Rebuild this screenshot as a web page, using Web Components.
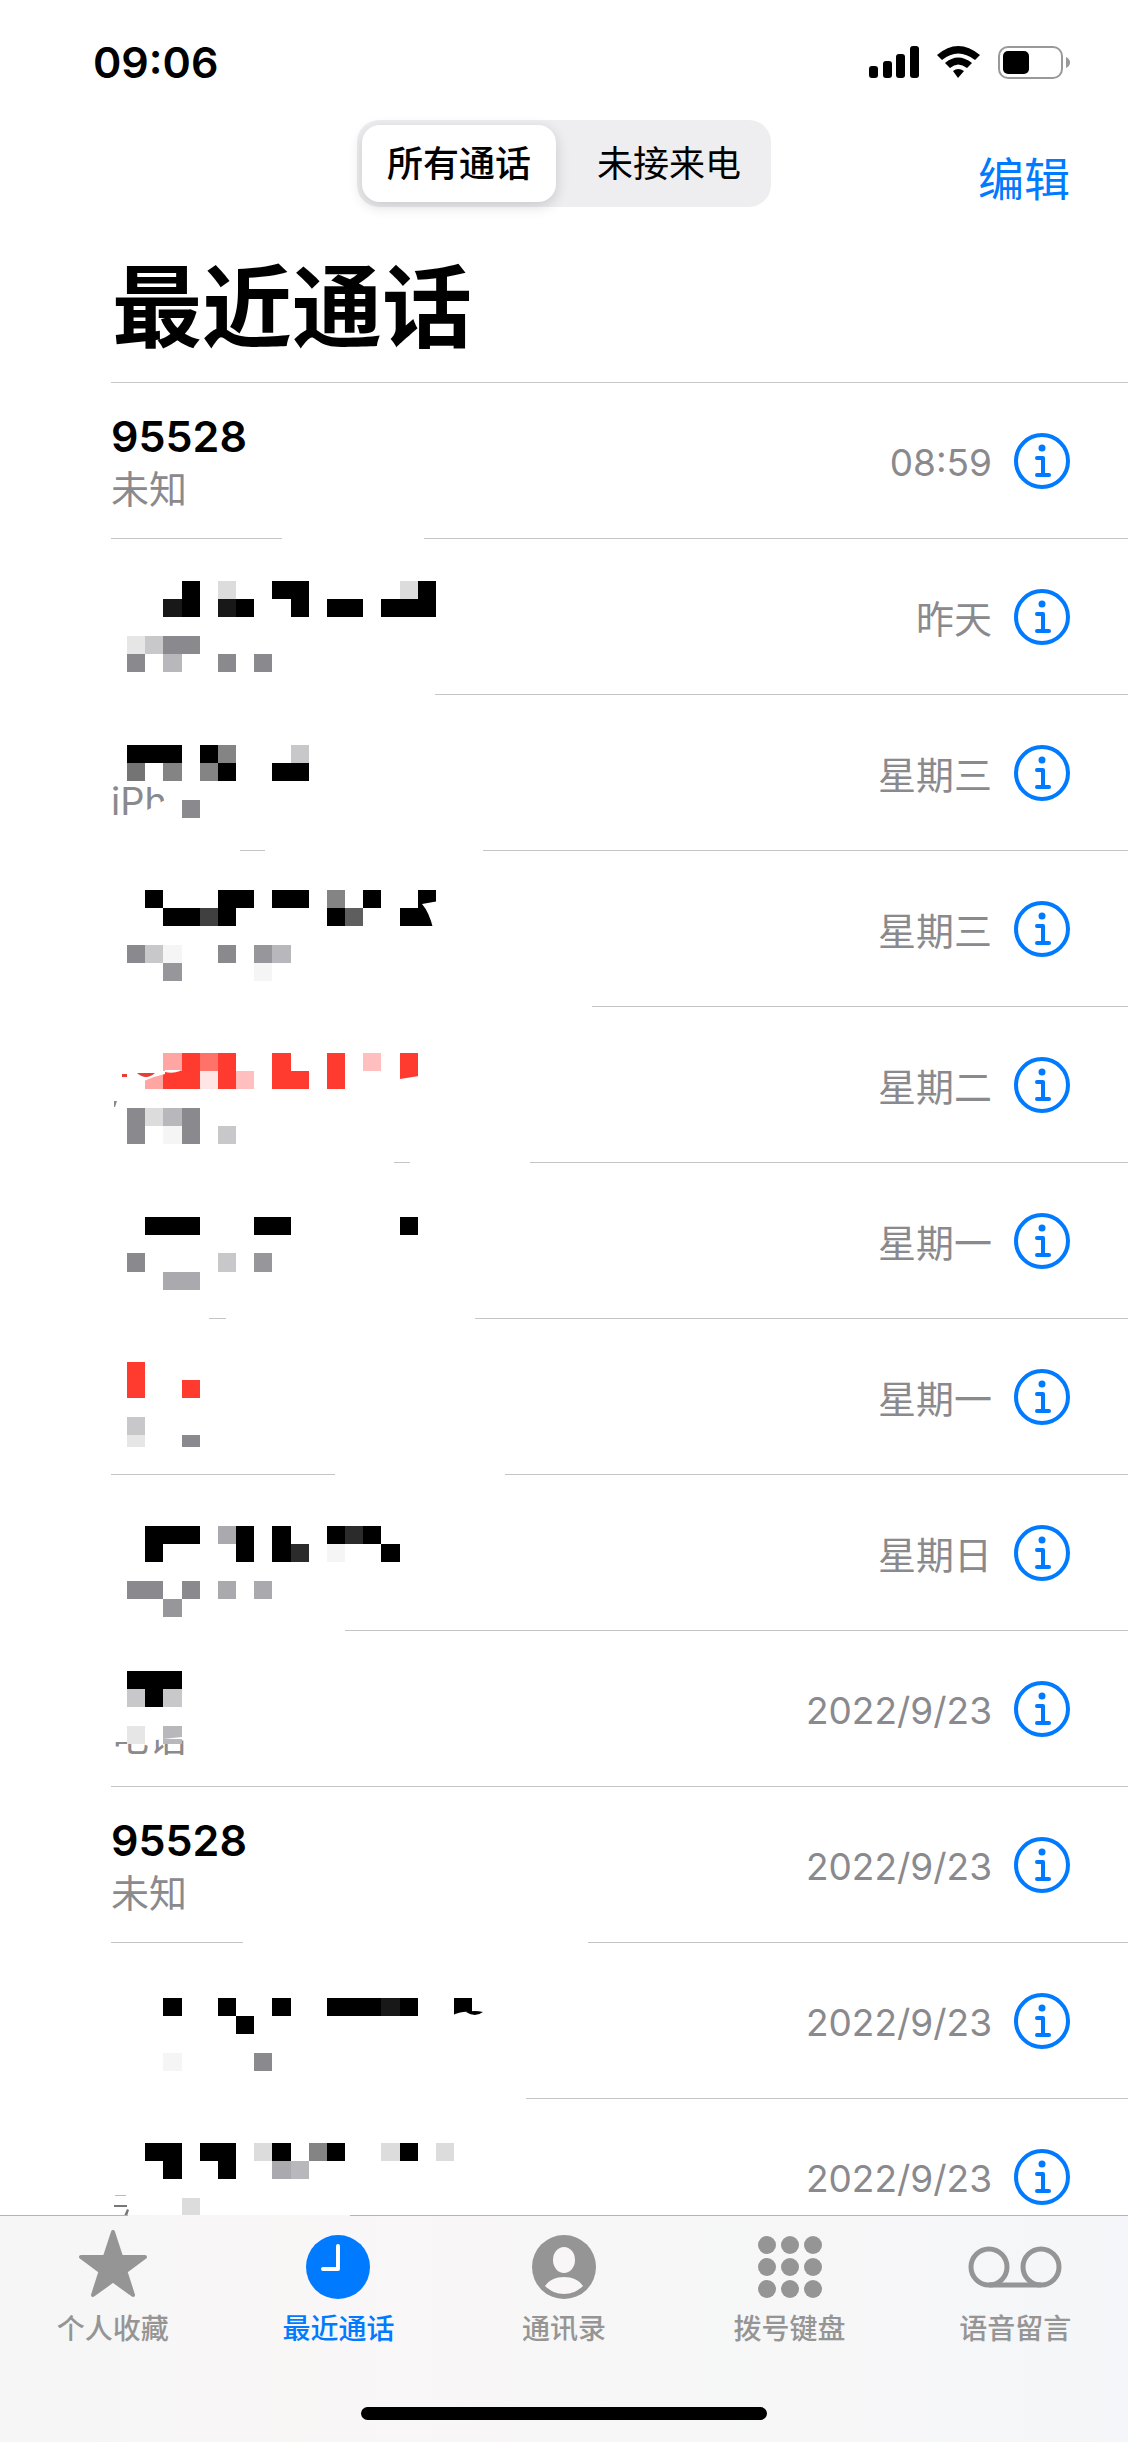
<!DOCTYPE html>
<html lang="zh-CN">
<head>
<meta charset="utf-8">
<meta name="viewport" content="width=device-width, initial-scale=1">
<title>最近通话</title>
<style>
  body {
    margin: 0;
    background: #fff;
    color: #000;
    font-family: Inter, "Noto Sans CJK SC", sans-serif;
  }
</style>
</head>
<body>
<phone-app></phone-app>

<script>
'use strict';

function attach(element, html) {
  const template = document.createElement('template');
  template.innerHTML = html;
  element.attachShadow({ mode: 'open' });
  element.shadowRoot.appendChild(template.content.cloneNode(true));
}

// One character per mosaic cell, a space is an empty cell
const PALETTE = {
  0: '#000', 1: '#181818', 2: '#2b2b2b', 4: '#404040', 5: '#5e5e5e', 7: '#747474', 8: '#848484',
  g: '#8a8a8e', h: '#96969b', a: '#aaaaae', b: '#b8b8bc', c: '#c8c8ca', d: '#dcdcdd', e: '#e6e6e7', f: '#f5f5f6',
  R: '#ff3b30', r: '#ff726a', s: '#ffa5a2', t: '#ffbfbe', u: '#ffe5e4'
};
const CELL = 18.17;

// rule: visible parts of the line under the row, measured from the text edge
const CALLS = [
  { name: '95528', label: '未知', time: '08:59', rule: [[0, 171], [313]] },
  {
    time: '昨天', rule: [[324]], top: 42,
    mosaic: ['   0 d  00     d0', '  10 10  0 00 000', '', 'ecgg', 'g b  g g']
  },
  {
    label: 'iPh', time: '星期三', rule: [[129, 154], [372]], top: 50,
    mosaic: ['000 08   c', '7 8 80  00', '', '   g'],
    under: '<path fill="#fff" d="M33 117l7-4 12-7 10-2v22H33z"/>'
  },
  {
    time: '星期三', rule: [[481]], top: 39,
    mosaic: [' 0   00 00 8 0  0', '  0040     05  00', '', 'gcf  g hb', '  h    f'],
    over: '<path fill="#fff" d="M328 50l-17 3q7 8 11 24h6z"/>'
  },
  {
    time: '星期二', rule: [[283, 299], [419]], top: 46,
    mosaic: ['  sRrR  R  R t R', ' sRRuRt RR R   R', '', 'gdbg', 'g fg c'],
    over: `<path fill="#fff" d="M33 64v10q11-5 21-7v-3zM54 65q8 2 15-1v-1H54zM289 72l19-3v15h-19z"/>
      <path fill="#e93c33" d="M11 67h5v3h-5zM26 66h18q-9 8-18 0"/>
      <path fill="#8a8a8e" d="M3 94h3l-2 6H3z"/>`
  },
  {
    time: '星期一', rule: [[98, 115], [364]], top: 54,
    mosaic: [' 000   00      0', '', 'g    c h', '  aa']
  },
  {
    time: '星期一', rule: [[0, 224], [394]], top: 43,
    mosaic: ['R', 'R  R', '', 'c', 'e  g'],
    over: '<path fill="#fff" d="M14 128h80v14H14z"/>'
  },
  {
    time: '星期日', rule: [[234]], top: 51,
    mosaic: [' 000 a0 0  020', ' 0    0 02 f  0', '', 'gg g a a', '  h']
  },
  {
    label: '电话', time: '2022/9/23', rule: [[0]], top: 40,
    mosaic: ['000', 'c0c', '', 'e b'],
    under: '<path fill="#fff" d="M0 78h80v26l-28 4-20 3H0z"/>',
    over: '<path fill="#fff" d="M52 108l19-2v2z"/>'
  },
  { name: '95528', label: '未知', time: '2022/9/23', rule: [[0, 132], [477]] },
  {
    time: '2022/9/23', rule: [[415]], top: 55,
    mosaic: ['  0  0  0  00010  0', '      0', '', '  f    g'],
    over: `<path fill="#fff" d="M342 72q10-4 15-3l5 3v4h-20z"/>
      <path d="M355 69q9-2 17 0-8 6-17 0"/>`
  },
  {
    time: '2022/9/23', rule: [], top: 44,
    mosaic: [' 00 00 d0 80  d0 d', '  0  0  ab', '', '   d'],
    over: `<path fill="#bbb" d="M4 96h11v1H4z"/>
      <path fill="#77777b" d="M3 106h13v2H3zM16 110l2 1-2 6h-3z"/>`
  }
];

const ICONS = {
  star: '<path d="M35 2 43.200 27H67L47.500 41.500 55 65 35 50.500 15 65 22.500 41.500 3 27H26.800z" stroke="currentColor" stroke-width="4" stroke-linejoin="round"/>',
  clock: '<circle cx="35" cy="37" r="32"/><path d="M35 16v23H20" fill="none" stroke="#fff" stroke-width="4" stroke-linecap="round" stroke-linejoin="round"/>',
  person: '<circle cx="35" cy="37" r="32"/><ellipse cx="35" cy="30" rx="11" ry="13" fill="#f8f6f6"/><path d="M16 56C20 50 27 47 35 47s15 3 19 9c-5 5-12 8-19 8s-14-3-19-8z" fill="#f8f6f6"/>',
  keypad: [14, 36, 58].map(y => [12, 35, 58].map(x => `<circle cx="${x}" cy="${y + 1}" r="9"/>`).join('')).join(''),
  voicemail: '<g fill="none" stroke="currentColor" stroke-width="5"><circle cx="9" cy="37" r="18"/><circle cx="61" cy="37" r="18"/><path d="M9 55h52"/></g>'
};

customElements.define('status-bar', class StatusBar extends HTMLElement {
  constructor() {
    super();
    attach(this, `
    <style>
      :host {
        display: flex;
        align-items: center;
        justify-content: space-between;
        padding: 34px 58px 30px 93px;
        font-size: 43px;
        line-height: 56px;
        font-weight: 600;
      }
      svg { display: block; }
    </style>
    <span>09:06</span>
    <svg width="202" height="36" viewBox="0 0 202 36" aria-hidden="true">
      <rect x="1" y="22" width="9" height="12" rx="3"/>
      <rect x="15" y="17" width="9" height="17" rx="3"/>
      <rect x="28" y="10" width="9" height="24" rx="3"/>
      <rect x="42" y="2" width="9" height="32" rx="3"/>
      <path d="M69 11Q90-7 112 11l-5 5Q90 3 74 16zM77 19q13-11 27 0l-5 5q-9-7-17 0zM85 27q5-4 11 0l-6 7z"/>
      <rect x="131" y="3" width="63" height="31" rx="9" fill="none" stroke="#999" stroke-width="2"/>
      <rect x="135" y="7" width="26" height="23" rx="5"/>
      <path d="M198 13q4 2 4 5.500t-4 5.500z" fill="#999"/>
    </svg>`);
  }
});

customElements.define('segmented-control', class SegmentedControl extends HTMLElement {
  constructor() {
    super();
    attach(this, `
    <style>
      :host {
        display: grid;
        grid-template-columns: 1fr 1fr;
        gap: 16px;
        padding: 5px;
        border-radius: 22px;
        background: #eeeef0;
      }
      button {
        padding: 13px 25px 12px;
        border: 0;
        border-radius: 18px;
        background: none;
        color: inherit;
        font: 400 36px/52px Inter, "Noto Sans CJK SC", sans-serif;
        white-space: nowrap;
      }
      button[aria-pressed="true"] {
        background: #fff;
        box-shadow: 0 4px 14px rgba(0, 0, 0, .16);
        font-weight: 500;
      }
    </style>
    <button type="button" aria-pressed="true">所有通话</button>
    <button type="button" aria-pressed="false">未接来电</button>`);
    this.buttons = [...this.shadowRoot.querySelectorAll('button')];
    this.buttons.forEach(button => button.addEventListener('click', () => {
      this.buttons.forEach(b => b.setAttribute('aria-pressed', b === button));
    }));
  }
});

customElements.define('page-header', class PageHeader extends HTMLElement {
  constructor() {
    super();
    attach(this, `
    <style>
      :host { display: block; }
      .bar {
        display: grid;
        grid-template-columns: 1fr auto 1fr;
        padding: 0 58px;
      }
      .edit {
        justify-self: end;
        align-self: end;
        padding: 0;
        border: 0;
        background: none;
        color: #007aff;
        font: 400 46px/56px Inter, "Noto Sans CJK SC", sans-serif;
      }
      h1 {
        margin: 0;
        padding: 50px 58px 23px 112px;
        font-size: 90px;
        line-height: 102px;
        font-weight: 700;
      }
      hr {
        height: 1px;
        margin: 0 0 0 111px;
        border: 0;
        background: #c8c8ca;
      }
    </style>
    <div class="bar">
      <span></span>
      <segmented-control></segmented-control>
      <button class="edit" type="button">编辑</button>
    </div>
    <h1><slot></slot></h1>
    <hr>`);
  }
});

customElements.define('call-row', class CallRow extends HTMLElement {
  set call(call) {
    const cells = (call.mosaic || []).map((line, row) => [...line].map((key, col) => key === ' ' ? '' :
      `<rect x="${16 + Math.round(col * CELL)}" y="${call.top + Math.round(row * CELL)}"
        width="${Math.round((col + 1) * CELL) - Math.round(col * CELL)}"
        height="${Math.round((row + 1) * CELL) - Math.round(row * CELL)}" fill="${PALETTE[key]}"/>`
    ).join('')).join('');
    const rules = call.rule.map(([from, to]) =>
      `<i style="left: ${from}px; ${to ? `width: ${to - from}px` : 'right: 0'}"></i>`).join('');

    attach(this, `
    <style>
      :host {
        position: relative;
        display: flex;
        align-items: center;
        box-sizing: border-box;
        min-height: 156px;
        margin-left: 111px;
        padding-right: 58px;
      }
      .who {
        flex: 1;
        align-self: flex-start;
        padding: 26px 0 24px;
      }
      .name {
        min-height: 54px;
        font-size: 43px;
        line-height: 54px;
        font-weight: 600;
      }
      .label, time {
        color: #8a8a8e;
        font-size: 38px;
        line-height: 52px;
      }
      time { margin: 4px 22px 0 0; }
      time.digits { font-size: 37px; }
      button {
        padding: 0;
        border: 0;
        background: none;
        color: #007aff;
      }
      svg { display: block; }
      .cover {
        position: absolute;
        left: 0;
        top: 0;
      }
      i {
        position: absolute;
        bottom: 0;
        height: 1px;
        background: #c4c4c6;
      }
    </style>
    <div class="who">
      <div class="name">${call.name || ''}</div>
      <div class="label">${call.label || ''}</div>
    </div>
    <time class="${/\d/.test(call.time) ? 'digits' : ''}">${call.time}</time>
    <button type="button" aria-label="详情">
      <svg width="56" height="56" viewBox="0 0 56 56" fill="none" stroke="currentColor" stroke-width="4">
        <circle cx="28" cy="28" r="26"/>
        <circle cx="28" cy="15" r="3.500" fill="currentColor" stroke="none"/>
        <path d="M23 25h6v17M23 42h12" stroke-width="4" stroke-linecap="round" stroke-linejoin="round"/>
      </svg>
    </button>
    ${cells ? `<svg class="cover" width="400" height="156" viewBox="0 0 400 156" aria-hidden="true">
      ${call.under || ''}<g shape-rendering="crispEdges">${cells}</g>${call.over || ''}
    </svg>` : ''}
    ${rules}`);
  }
});

customElements.define('call-list', class CallList extends HTMLElement {
  constructor() {
    super();
    attach(this, `
    <style>
      :host {
        display: block;
        overflow: hidden;
      }
    </style>`);
    CALLS.forEach(call => {
      const row = document.createElement('call-row');
      row.call = call;
      this.shadowRoot.appendChild(row);
    });
  }
});

customElements.define('tab-item', class TabItem extends HTMLElement {
  constructor() {
    super();
    attach(this, `
    <style>
      :host {
        display: block;
        color: #969595;
      }
      :host([selected]) { color: #007aff; }
      a {
        display: flex;
        flex-direction: column;
        align-items: center;
        gap: 8px;
        color: inherit;
        font-size: 28px;
        line-height: 38px;
        font-weight: 500;
        text-decoration: none;
        white-space: nowrap;
      }
      svg {
        display: block;
        overflow: visible;
      }
    </style>
    <a href="#"><svg width="70" height="72" viewBox="0 0 70 72" fill="currentColor" aria-hidden="true">${ICONS[this.getAttribute('icon')]}</svg><slot></slot></a>`);
  }
});

customElements.define('tab-bar', class TabBar extends HTMLElement {
  constructor() {
    super();
    attach(this, `
    <style>
      :host {
        display: block;
        background: linear-gradient(90deg, #f6f6f6, #f9f6f6 25%, #f7f7f7 60%, #f5f6f9);
      }
      .line {
        height: 1px;
        background: linear-gradient(#b4b4b4, #b4b4b4) no-repeat 350px 0, linear-gradient(#b4b4b4, #b4b4b4) no-repeat 0 0 / 128px 1px;
      }
      nav {
        display: grid;
        grid-template-columns: repeat(5, 1fr);
        padding: 14px 0 59px;
      }
      .home {
        width: 36%;
        height: 13px;
        margin: 0 auto;
        border-radius: 7px;
        background: #000;
      }
      footer { padding-bottom: 22px; }
    </style>
    <div class="line"></div>
    <nav>
      <tab-item icon="star">个人收藏</tab-item>
      <tab-item icon="clock" selected>最近通话</tab-item>
      <tab-item icon="person">通讯录</tab-item>
      <tab-item icon="keypad">拨号键盘</tab-item>
      <tab-item icon="voicemail">语音留言</tab-item>
    </nav>
    <footer><div class="home"></div></footer>`);
  }
});

customElements.define('phone-app', class PhoneApp extends HTMLElement {
  constructor() {
    super();
    attach(this, `
    <style>
      :host {
        display: flex;
        flex-direction: column;
        height: 100vh;
      }
      call-list {
        flex: 1;
        min-height: 0;
      }
    </style>
    <status-bar></status-bar>
    <page-header>最近通话</page-header>
    <call-list></call-list>
    <tab-bar></tab-bar>`);
  }
});
</script>
</body>
</html>
